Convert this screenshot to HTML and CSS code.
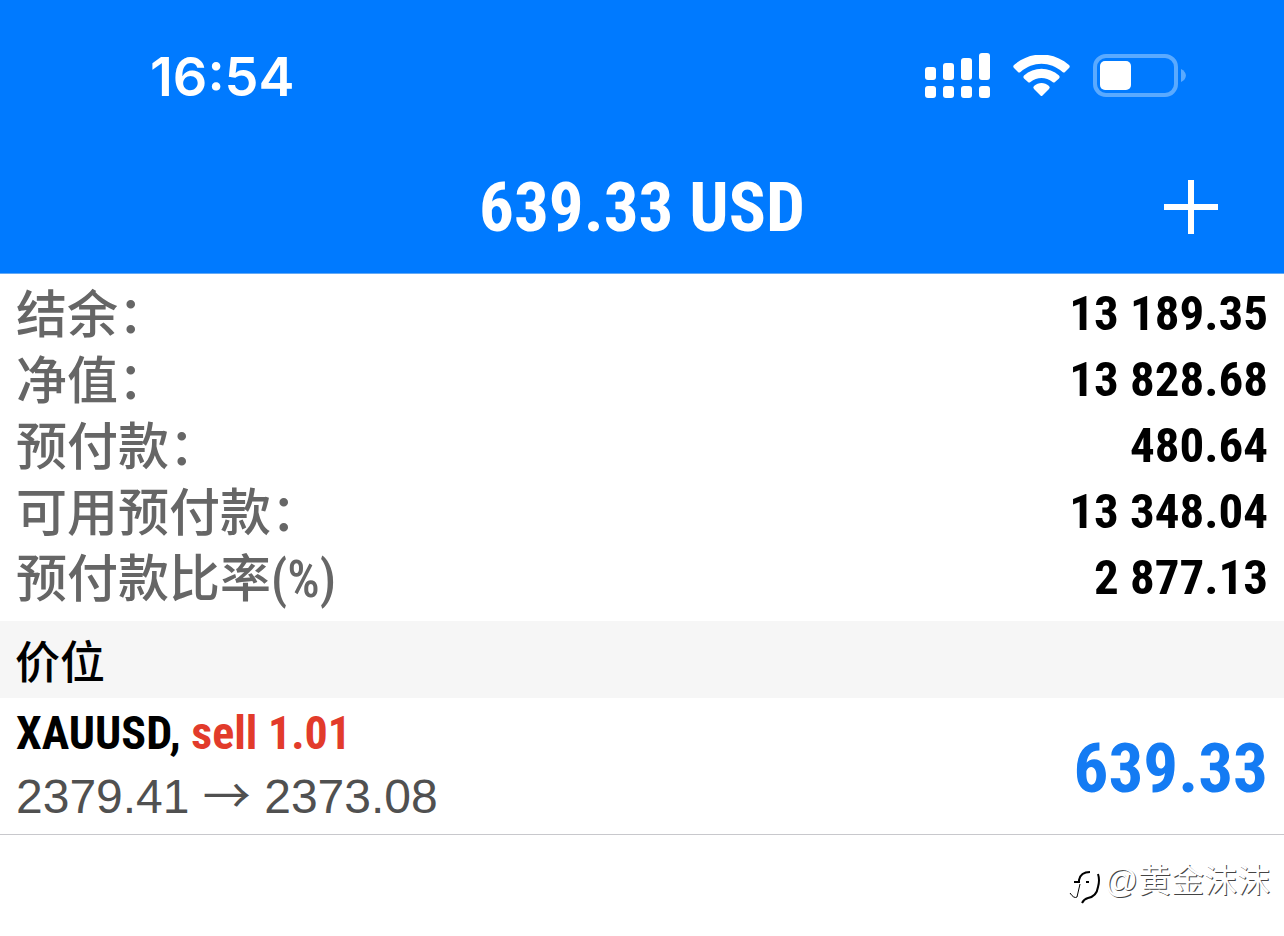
FILE: index.html
```html
<!DOCTYPE html>
<html lang="zh-CN">
<head>
<meta charset="utf-8">
<meta name="viewport" content="width=device-width, initial-scale=1">
<title>639.33 USD</title>
<link rel="stylesheet" href="styles.css">
</head>
<body>
<header class="header">
  <div class="status">
    <time class="clock">16:54</time>
    <div class="indicators">
      <svg class="signal" width="66" height="46" viewBox="0 0 66 46" fill="currentColor" aria-hidden="true">
        <rect x="0" y="14" width="11" height="13" rx="3"/><rect x="18" y="10" width="11" height="17" rx="3"/><rect x="36" y="5" width="11" height="22" rx="3"/><rect x="54" y="0" width="11" height="27" rx="3"/>
        <rect x="0" y="33" width="11" height="12" rx="3"/><rect x="18" y="33" width="11" height="12" rx="3"/><rect x="36" y="33" width="11" height="12" rx="3"/><rect x="54" y="33" width="11" height="12" rx="3"/>
      </svg>
      <svg class="wifi" width="58" height="42" viewBox="0 0 58 42" fill="currentColor" aria-hidden="true">
        <path d="M1 10C17-4 40-4 56 10Q57.500 11.500 56 13L52 17Q51 18 49.500 17C37 6 20 6 7.500 17Q6 18 5 17L1 13Q-.500 11.500 1 10Z"/>
        <path d="M11 20.500C21 11.500 36 11.500 46 20.500Q47.500 22 46 23.500L42 27Q41 28 39.500 27C33 21.500 24 21.500 17.500 27Q16 28 15 27L11 23.500Q9.500 22 11 20.500Z"/>
        <path d="M21 31C25.500 27 31.500 27 36 31Q37.500 32.500 36 34L29.500 40.500Q28.500 41.500 27.500 40.500L21 34Q19.500 32.500 21 31Z"/>
      </svg>
      <svg class="battery" width="94" height="44" viewBox="0 0 94 44" aria-hidden="true">
        <rect x="2" y="2" width="81" height="39" rx="11" fill="none" stroke="#5aaaff" stroke-width="4"/>
        <rect x="7" y="7" width="31" height="29" rx="5" fill="#fff"/>
        <path d="M88 15C94.500 18 94.500 25 88 28Z" fill="#5aaaff"/>
      </svg>
    </div>
  </div>
  <div class="nav">
    <h1 class="title">639.33 USD</h1>
    <button class="add" type="button" aria-label="新订单">
      <svg width="54" height="54" viewBox="0 0 54 54" aria-hidden="true"><path d="M27 0V54M0 27H54" stroke="currentColor" stroke-width="6"/></svg>
    </button>
  </div>
</header>
<main>
  <dl class="summary">
    <div class="row"><dt>结余：</dt><dd>13 189.35</dd></div>
    <div class="row"><dt>净值：</dt><dd>13 828.68</dd></div>
    <div class="row"><dt>预付款：</dt><dd>480.64</dd></div>
    <div class="row"><dt>可用预付款：</dt><dd>13 348.04</dd></div>
    <div class="row"><dt>预付款比率(%)</dt><dd>2 877.13</dd></div>
  </dl>
  <h2 class="section">价位</h2>
  <article class="position">
    <div class="details">
      <p class="symbol">XAUUSD, <span class="sell">sell 1.01</span></p>
      <p class="prices">2379.41 <span class="arrow">→</span> 2373.08</p>
    </div>
    <strong class="profit">639.33</strong>
  </article>
</main>
<footer class="credit">
  <svg width="32" height="36" viewBox="0 0 32 36" fill="none" stroke="#000" aria-hidden="true">
    <path d="M5 11H10V9C11 4 14 1 21 1" stroke-width="2"/>
    <path d="M17 11H20" stroke-width="2"/>
    <path d="M11 13L8 26Q5 28 1 22" stroke-width="1"/>
    <path d="M29 3Q31 9 29 16C28 23 24 26 19 27Q15 28 13 32" stroke-width="2"/>
  </svg>
  <span>@黄金沫沫</span>
</footer>
</body>
</html>
```
FILE: styles.css
```css
* { box-sizing: border-box; }

body {
  margin: 0;
  background: #fff;
  color: #000;
  font-family: "Roboto Condensed", "Noto Sans CJK SC", sans-serif;
}

h1, h2, p, dl, dd { margin: 0; }

.header {
  background: #007aff;
  color: #fff;
  border-bottom: 1px solid #64aaf5;
}

.status {
  display: flex;
  justify-content: space-between;
  align-items: center;
  height: 140px;
  padding: 12px 97px 0 150px;
}

.clock {
  padding-top: 2px;
  font: 600 54px/62px Inter, sans-serif;
}

.indicators {
  display: flex;
  align-items: center;
  gap: 22px;
}

.nav {
  display: grid;
  grid-template-columns: 1fr auto 1fr;
  align-items: center;
  height: 133px;
  padding: 0 66px;
}

.title {
  grid-column: 2;
  padding-top: 2px;
  font-size: 69px;
  line-height: 80px;
}

.add {
  justify-self: end;
  display: flex;
  padding: 0;
  border: 0;
  background: none;
  color: inherit;
}

.summary { padding: 7px 16px 10px; }

.row {
  display: flex;
  justify-content: space-between;
  align-items: center;
  height: 66px;
}

.row dt {
  padding-top: 4px;
  color: #666;
  font-weight: 500;
  font-size: 51px;
  line-height: 66px;
}

.row dd {
  font-weight: 700;
  font-size: 49px;
  line-height: 66px;
}

.section {
  padding: 0 15px;
  background: #f6f6f6;
  font-family: "Noto Sans CJK SC", sans-serif;
  font-weight: 500;
  font-size: 45px;
  line-height: 77px;
}

.position {
  display: flex;
  justify-content: space-between;
  align-items: center;
  padding: 4px 16px 6px;
  border-bottom: 1px solid #c8c8cc;
}

.symbol {
  font-weight: 700;
  font-size: 46px;
  line-height: 63px;
}

.sell { color: #e23b2b; }

.prices {
  color: #505050;
  font-family: "Liberation Sans", Arial, sans-serif;
  font-size: 48px;
  line-height: 63px;
}

.arrow {
  font-family: "Noto Sans CJK SC", sans-serif;
  line-height: 1;
}

.profit {
  padding-top: 8px;
  color: #147bf3;
  font-size: 69px;
  line-height: 80px;
}

.credit {
  display: flex;
  justify-content: flex-end;
  align-items: flex-end;
  gap: 4px;
  padding: 20px 14px 0;
  color: #fff;
  font: 33px/52px "Liberation Sans", "Noto Sans CJK SC", sans-serif;
  text-shadow: 1px 1px 0 #444;
}
```
